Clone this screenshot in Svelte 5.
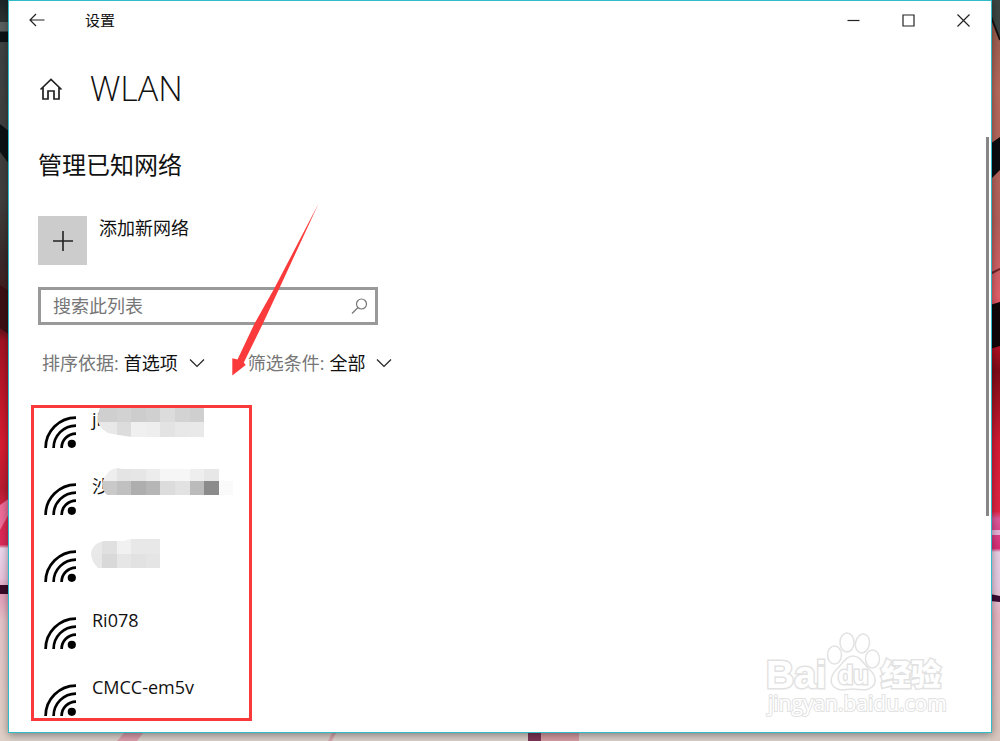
<script>
  const networks = [
    {
      name: 'ji',
      clip: 'M9 0H113V29H41L21 26Q11 24 7 14Q6 6 9 0Z',
      cells: {
        xs: [6, 26, 40, 55, 69, 84, 99, 113],
        ys: [0, 14, 29],
        rows: [
          ['#cfcfcf', '#d2d2d2', '#cdcdcd', '#d0d0d0', '#dcdcdc', '#d3d3d3', '#cfcfcf'],
          ['#e8e8e8', '#dcdcdc', '#f0f0f0', '#eeeeee', '#e3e3e3', '#e8e8e8', '#e9e9e9']
        ]
      }
    },
    {
      name: '沙',
      clip: 'M11 8Q16 -6 26 -7L31 -6H128V6H142V20H16Q11 15 11 8Z',
      cells: {
        xs: [10, 26, 40, 55, 69, 84, 99, 113, 128, 142],
        ys: [-7, 6, 20],
        rows: [
          ['#eeeeee', '#e4e4e4', '#e6e6e6', '#ececec', '#f6f6f6', '#f6f6f6', '#eeeeee', '#e7e7e7', '#ffffff'],
          ['#c9c9c9', '#c0c0c0', '#aeaeae', '#b6b6b6', '#dcdcdc', '#e2e2e2', '#bbbbbb', '#8b8b8b', '#fafafa']
        ]
      }
    },
    {
      name: '',
      clip: 'M0 11Q2 1 13 -1H33L40 -3H69V26H7Q0 19 0 11Z',
      cells: {
        xs: [0, 11, 26, 40, 55, 69],
        ys: [-3, 12, 26],
        rows: [
          ['#e9e9e9', '#e0e0e0', '#f1f1f1', '#e8e8e8', '#e8e8e8'],
          ['#e8e8e8', '#d9d9d9', '#e6e6e6', '#e2e2e2', '#e5e5e5']
        ]
      }
    },
    { name: 'Ri078' },
    { name: 'CMCC-em5v' }
  ];
</script>

<div class="desktop">
  <svg class="wallpaper" viewBox="0 0 1000 741" preserveAspectRatio="none" aria-hidden="true">
    <defs>
      <linearGradient id="left" x1="0" y1="0" x2="0" y2="1">
        <stop offset="0" stop-color="#1d2425" />
        <stop offset="0.06" stop-color="#3d4242" />
        <stop offset="0.27" stop-color="#403f3d" />
        <stop offset="0.35" stop-color="#3a2a2a" />
        <stop offset="0.44" stop-color="#4b1519" />
        <stop offset="0.46" stop-color="#a31222" />
        <stop offset="0.6" stop-color="#d81c30" />
        <stop offset="0.66" stop-color="#b81e30" />
        <stop offset="0.7" stop-color="#e02a50" />
        <stop offset="0.735" stop-color="#d92a5a" />
        <stop offset="0.74" stop-color="#ead8ee" />
        <stop offset="0.78" stop-color="#e8c4dc" />
        <stop offset="0.8" stop-color="#e29ab8" />
        <stop offset="0.84" stop-color="#e4c4c8" />
        <stop offset="1" stop-color="#dfd0c6" />
      </linearGradient>
      <linearGradient id="right" x1="0" y1="0" x2="0" y2="1">
        <stop offset="0" stop-color="#8c5648" />
        <stop offset="0.12" stop-color="#b56a5c" />
        <stop offset="0.3" stop-color="#b2605a" />
        <stop offset="0.4" stop-color="#e0606a" />
        <stop offset="0.46" stop-color="#c01028" />
        <stop offset="0.5" stop-color="#7e0c18" />
        <stop offset="0.6" stop-color="#d41c34" />
        <stop offset="0.69" stop-color="#e02444" />
        <stop offset="0.7" stop-color="#dc5a9c" />
        <stop offset="0.74" stop-color="#d82c74" />
        <stop offset="0.745" stop-color="#e6cfe2" />
        <stop offset="0.79" stop-color="#e4c8e0" />
        <stop offset="0.83" stop-color="#e4b4c0" />
        <stop offset="1" stop-color="#d8c8be" />
      </linearGradient>
    </defs>
    <rect width="1000" height="741" fill="#d9cfc9" />
    <rect width="10" height="741" fill="url(#left)" />
    <rect y="22" width="10" height="9" fill="#5a6060" />
    <path d="M0 32H10V42H0ZM0 124L10 132V165L0 152Z" fill="#0c1314" />
    <path d="M0 285L10 292V335L0 328Z" fill="#3c1014" />
    <path d="M0 505L10 498V512L0 530Z" fill="#ec6d98" />
    <rect y="585" width="10" height="9" fill="#3a0a28" />
    <rect x="990" width="10" height="741" fill="url(#right)" />
    <path d="M990 0H1000V38L990 14Z" fill="#3c4542" />
    <path class="seam" d="M990 14L1000 40" stroke="#15100f" />
    <path d="M990 144L1000 137V170L990 180Z" fill="#0c0d11" />
    <path class="seam" d="M990 274L1000 269" stroke="#6b2428" />
    <path d="M990 305L1000 302V346L990 349Z" fill="#120609" />
    <rect x="990" y="530" width="10" height="5" fill="#e4b2d6" />
    <path d="M990 594L1000 596V602L990 601Z" fill="#3a0a32" />
    <path d="M124 733H143L137 741H117Z" fill="#db9dab" />
    <path d="M332 733H336L332 741H328Z" fill="#d5a4ad" />
    <rect x="528" y="733" width="13" height="8" fill="#7c3455" />
    <rect x="541" y="733" width="38" height="8" fill="#d59ba2" />
  </svg>

  <div class="window">
    <header class="titlebar">
      <button class="back" aria-label="返回">
        <svg width="16" height="14" viewBox="0 0 16 14"><path d="M15.500 7H1M7 1L1 7l6 6" /></svg>
      </button>
      <span class="caption">设置</span>
      <div class="controls">
        <button aria-label="最小化"><svg width="13" height="13" viewBox="0 0 13 13"><path d="M.5 6.500h12" /></svg></button>
        <button aria-label="最大化"><svg width="13" height="13" viewBox="0 0 13 13"><path d="M1 1h11v11H1z" /></svg></button>
        <button aria-label="关闭"><svg width="13" height="13" viewBox="0 0 13 13"><path d="M.5.5l12 12M12.500.5l-12 12" /></svg></button>
      </div>
    </header>

    <main>
      <div class="heading">
        <button class="home" aria-label="主页">
          <svg width="26" height="24" viewBox="0 0 26 24"><path d="M2.500 12.500L13 2.500l10.500 10M5 10.500V22h5v-8h6v8h5V10.500" /></svg>
        </button>
        <h1>WLAN</h1>
      </div>

      <h2>管理已知网络</h2>

      <button class="add">
        <span class="plus"><svg width="20" height="20" viewBox="0 0 20 20"><path d="M10 0v20M0 10h20" /></svg></span>
        <span>添加新网络</span>
      </button>

      <div class="search">
        <input type="text" placeholder="搜索此列表" aria-label="搜索此列表" />
        <svg width="17" height="17" viewBox="0 0 17 17" aria-hidden="true"><circle cx="10.500" cy="6" r="5" /><path d="M7 9.500L1 15.500" /></svg>
      </div>

      <div class="filters">
        <div class="filter">
          <label for="sort">排序依据:</label>
          <select id="sort"><option>首选项</option></select>
          <svg width="16" height="10" viewBox="0 0 16 10" aria-hidden="true"><path d="M1 1.500l7 7 7-7" /></svg>
        </div>
        <div class="filter">
          <label for="show">筛选条件:</label>
          <select id="show"><option>全部</option></select>
          <svg width="16" height="10" viewBox="0 0 16 10" aria-hidden="true"><path d="M1 1.500l7 7 7-7" /></svg>
        </div>
      </div>

      <ul class="networks">
        {#each networks as net, n}
          <li>
            <svg class="wifi" width="32" height="32" viewBox="0 0 32 32" aria-hidden="true">
              <path d="M1.600 32A30.400 30.400 0 0 1 32 1.600M9.600 32A22.400 22.400 0 0 1 32 9.600M17.600 32A14.400 14.400 0 0 1 32 17.600" />
              <circle cx="27.800" cy="27.800" r="4.100" />
            </svg>
            <span>{net.name}</span>
            {#if net.cells}
              <svg class="mosaic" width="145" height="34" viewBox="0 0 145 34" aria-hidden="true">
                <clipPath id="mask{n}"><path d={net.clip} /></clipPath>
                <g clip-path="url(#mask{n})">
                  {#each net.cells.rows as row, r}
                    {#each row as fill, c}
                      <rect
                        x={net.cells.xs[c]}
                        y={net.cells.ys[r]}
                        width={net.cells.xs[c + 1] - net.cells.xs[c]}
                        height={net.cells.ys[r + 1] - net.cells.ys[r]}
                        {fill}
                      />
                    {/each}
                  {/each}
                </g>
              </svg>
            {/if}
          </li>
        {/each}
      </ul>
    </main>

    <div class="scrollbar"></div>

    <svg class="pointer" width="90" height="175" viewBox="230 202 90 175" aria-hidden="true">
      <path d="M318.600 203.500L274.500 288 254.300 324 237.500 359.500 232.300 358.300V375.500L245.700 365 243.800 362.500 262.700 324 279.500 288Z" />
    </svg>

    <svg class="watermark" width="184" height="90" viewBox="764 630 184 90">
      <text class="brand" x="766" y="689">Bai</text>
      <g class="paw">
        <ellipse cx="834.500" cy="656" rx="7" ry="9" />
        <ellipse cx="847" cy="643.500" rx="7" ry="9.500" />
        <ellipse cx="862.500" cy="644.500" rx="7" ry="9.500" transform="rotate(12 862.500 644.500)" />
        <ellipse cx="872.500" cy="660" rx="7" ry="9" />
        <path d="M853 657C846 657 843 664 838 669C831 675 829 683 834 688C840 693 846 690 853 690C860 690 866 693 872 688C878 683 875 675 868 669C863 664 860 657 853 657Z" />
      </g>
      <text class="du" x="838" y="685">du</text>
      <text class="cn" x="881" y="686">经验</text>
      <text class="url" x="768" y="712">jingyan.baidu.com</text>
    </svg>
  </div>
</div>

<style>
  :global(body) {
    margin: 0;
  }
  .desktop {
    position: relative;
    box-sizing: border-box;
    min-height: 100vh;
    padding: 0 8px 8px;
    display: flex;
    font-family: 'Open Sans', 'Noto Sans CJK SC', sans-serif;
    color: #111;
    overflow: hidden;
  }
  button {
    border: 0;
    padding: 0;
    background: none;
    font: inherit;
    color: inherit;
    display: flex;
    align-items: center;
    justify-content: center;
  }
  svg {
    display: block;
    fill: none;
    stroke: #222;
    stroke-width: 1.2;
    flex: none;
  }
  .wallpaper {
    position: absolute;
    inset: 0;
    width: 100%;
    height: 100%;
    stroke: none;
  }
  .seam {
    stroke-width: 2;
  }
  .window {
    position: relative;
    flex: 1;
    box-sizing: border-box;
    background: #fff;
    border: 1px solid #2fbcc8;
    box-shadow: 0 2px 8px rgba(0, 0, 0, 0.4);
  }
  .titlebar {
    display: flex;
    align-items: center;
    height: 38px;
  }
  .back {
    width: 56px;
    height: 38px;
  }
  .caption {
    margin-left: 20px;
    font-size: 15px;
    line-height: 24px;
  }
  .controls {
    display: flex;
    margin-left: auto;
  }
  .controls button {
    width: 55px;
    height: 38px;
  }
  main {
    padding: 25px 29px 11px;
  }
  .heading {
    display: flex;
    align-items: center;
    gap: 26px;
    height: 48px;
  }
  .home {
    padding-top: 2px;
  }
  .home svg {
    stroke-width: 1.7;
  }
  h1 {
    margin: 0;
    font-size: 34px;
    line-height: 48px;
    font-weight: 300;
  }
  h2 {
    margin: 35px 0 33px;
    font-size: 24px;
    line-height: 36px;
    font-weight: 400;
  }
  .add {
    align-items: flex-start;
    gap: 12px;
    font-size: 18px;
    line-height: 24px;
  }
  .plus {
    display: grid;
    place-items: center;
    width: 49px;
    height: 49px;
    background: #ccc;
  }
  .plus svg {
    stroke-width: 1.6;
  }
  .search {
    display: flex;
    align-items: center;
    box-sizing: border-box;
    max-width: 340px;
    height: 38px;
    margin-top: 22px;
    padding: 0 7px 0 12px;
    border: 3px solid #999;
  }
  .search input {
    flex: 1;
    min-width: 0;
    padding: 0;
    border: 0;
    outline: 0;
    background: none;
    font: inherit;
    font-size: 18px;
    line-height: 24px;
  }
  .search input::placeholder {
    color: #767676;
    opacity: 1;
  }
  .search svg {
    stroke: #777;
  }
  .filters {
    display: flex;
    gap: 43px;
    margin: 26px 0 30px 4px;
    font-size: 18px;
    line-height: 24px;
  }
  .filter {
    display: flex;
    align-items: center;
    height: 24px;
  }
  .filter label {
    color: #767676;
  }
  .filter select {
    appearance: none;
    border: 0;
    padding: 0;
    margin: 0 11px 0 5px;
    background: none;
    font: inherit;
    color: #111;
  }
  .networks {
    list-style: none;
    box-sizing: border-box;
    max-width: 221px;
    margin: 0 0 0 -7px;
    padding: 0;
    border: 3px solid #fa3a3a;
  }
  .networks li {
    position: relative;
    display: flex;
    align-items: flex-start;
    gap: 16px;
    height: 67px;
    padding-left: 10px;
    font-size: 18px;
    line-height: 22px;
  }
  .networks li:last-child {
    height: 42px;
  }
  .wifi {
    margin-top: 8px;
    stroke: #000;
    stroke-width: 2.7;
  }
  .wifi circle {
    fill: #000;
    stroke: none;
  }
  .mosaic {
    position: absolute;
    left: 57px;
    top: 0;
    overflow: visible;
    stroke: none;
    shape-rendering: crispEdges;
  }
  .scrollbar {
    position: absolute;
    top: 136px;
    right: 2px;
    width: 3px;
    height: 379px;
    background: #868686;
  }
  .pointer {
    position: absolute;
    left: 221px;
    top: 201px;
    fill: #fb3b3b;
    stroke: none;
  }
  .watermark {
    position: absolute;
    right: 43px;
    bottom: 13px;
    fill: #fff;
    stroke: #e2e2e2;
    stroke-width: 1.5;
  }
  .watermark text {
    paint-order: stroke;
    stroke-width: 3;
  }
  .watermark .brand {
    font: 700 39px 'Liberation Sans', sans-serif;
  }
  .watermark .du {
    font: 700 25px 'Liberation Sans', sans-serif;
  }
  .watermark .cn {
    font: 900 30px 'Noto Sans CJK SC', sans-serif;
  }
  .watermark .url {
    font: 400 21px 'Open Sans', sans-serif;
    stroke-width: 2;
  }
</style>
